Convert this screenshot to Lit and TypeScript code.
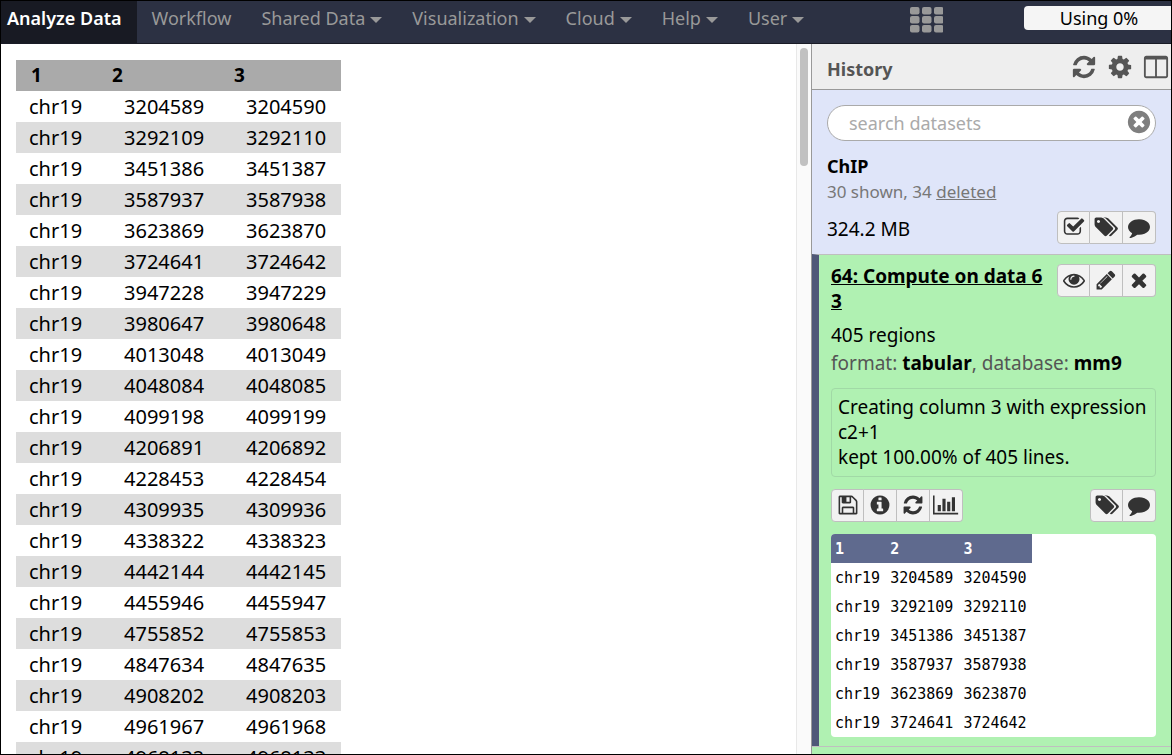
import { LitElement, html, css, svg } from "lit";
import { customElement, property } from "lit/decorators.js";

const CIRCLE = "m387-226q0 209-103 385.5t-279.5 279.5-385.5 103-385.5-103-279.5-279.5-103-385.5 103-385.5 279.5-279.5 385.5-103 385.5 103 279.5 279.5 103 385.5z";

const ICONS: Record<string, { w: number; d: string }> = {
  refresh: { w: 1792, d: "M1639 1056q0 5-1 7-64 268-268 434.5t-478 166.5q-146 0-282.5-55t-243.5-157l-129 129q-19 19-45 19t-45-19-19-45v-448q0-26 19-45t45-19h448q26 0 45 19t19 45-19 45l-137 137q71 66 161 102t187 36q134 0 250-65t186-179q11-17 53-117 8-23 30-23h192q13 0 22.5 9.5t9.5 22.5zm25-800v448q0 26-19 45t-45 19h-448q-26 0-45-19t-19-45 19-45l138-138q-148-137-349-137-134 0-250 65t-186 179q-11 17-53 117-8 23-30 23h-199q-13 0-22.5-9.5t-9.5-22.5v-7q65-268 270-434.5t480-166.5q146 0 284 55.5t245 156.5l130-129q19-19 45-19t45 19 19 45z" },
  cog: { w: 1792, d: "M1152 896q0-106-75-181t-181-75-181 75-75 181 75 181 181 75 181-75 75-181zm512-109v222q0 12-8 23t-20 13l-185 28q-19 54-39 91 35 50 107 138 10 12 10 25t-9 23q-27 37-99 108t-94 71q-12 0-26-9l-138-108q-44 23-91 38-16 136-29 186-7 28-36 28h-222q-14 0-24.5-8.5t-11.5-21.5l-28-184q-49-16-90-37l-141 107q-10 9-25 9-14 0-25-11-126-114-165-168-7-10-7-23 0-12 8-23 15-21 51-66.5t54-70.5q-27-50-41-99l-183-27q-13-2-21-12.5t-8-23.5v-222q0-12 8-23t19-13l186-28q14-46 39-92-40-57-107-138-10-12-10-24 0-10 9-23 26-36 98.5-107.5t94.5-71.5q13 0 26 10l138 107q44-23 91-38 16-136 29-186 7-28 36-28h222q14 0 24.5 8.5t11.5 21.5l28 184q49 16 90 37l142-107q9-9 24-9 13 0 25 10 129 119 165 170 7 8 7 22 0 12-8 23-15 21-51 66.5t-54 70.5q26 50 41 98l183 28q13 2 21 12.5t8 23.5z" },
  columns: { w: 1792, d: "M224 1536h608v-1152h-640v1120q0 13 9.5 22.5t22.5 9.5zm1376-32v-1120h-640v1152h608q13 0 22.5-9.5t9.5-22.5zm128-1216v1216q0 66-47 113t-113 47h-1344q-66 0-113-47t-47-113v-1216q0-66 47-113t113-47h1344q66 0 113 47t47 113z" },
  check: { w: 1792, d: "M1472 930v318q0 119-84.5 203.5t-203.5 84.5h-832q-119 0-203.5-84.5t-84.5-203.5v-832q0-119 84.5-203.5t203.5-84.5h832q63 0 117 25 15 7 18 23 3 17-9 29l-49 49q-10 10-23 10-3 0-9-2-23-6-45-6h-832q-66 0-113 47t-47 113v832q0 66 47 113t113 47h832q66 0 113-47t47-113v-254q0-13 9-22l64-64q10-10 23-10 6 0 12 3 20 8 20 29zm231-489l-814 814q-24 24-57 24t-57-24l-430-430q-24-24-24-57t24-57l110-110q24-24 57-24t57 24l263 263 647-647q24-24 57-24t57 24l110 110q24 24 24 57t-24 57z" },
  tags: { w: 2048, d: "M576 448q0-53-37.5-90.5t-90.5-37.5-90.5 37.5-37.5 90.5 37.5 90.5 90.5 37.5 90.5-37.5 37.5-90.5zm1067 576q0 53-37 90l-491 492q-39 37-91 37-53 0-90-37l-715-716q-38-37-64.5-101t-26.5-117v-416q0-52 38-90t90-38h416q53 0 117 26.5t102 64.5l715 714q37 39 37 91zm384 0q0 53-37 90l-491 492q-39 37-91 37-36 0-59-14t-53-45l470-470q37-37 37-90 0-52-37-91l-715-714q-38-38-102-64.5t-117-26.5h224q53 0 117 26.5t102 64.5l715 714q37 39 37 91z" },
  comment: { w: 1792, d: "M1792 896q0 174-120 321.5t-326 233-450 85.5q-70 0-145-8-198 175-460 242-49 14-114 22-17 2-30.5-9t-17.5-29v-1q-3-4-.5-12t2-10 4.5-9.5l6-9 7-8.5 8-9q7-8 31-34.5t34.5-38 31-39.5 32.5-51 27-59 26-76q-157-89-247.5-220t-90.5-281q0-130 71-248.5t191-204.5 286-136.5 348-50.5q244 0 450 85.5t326 233 120 321.5z" },
  eye: { w: 1792, d: "M1664 960q-152-236-381-353 61 104 61 225 0 185-131.5 316.5t-316.5 131.5-316.5-131.5-131.5-316.5q0-121 61-225-229 117-381 353 133 205 333.5 326.5t434.5 121.5 434.5-121.5 333.5-326.5zm-720-384q0-20-14-34t-34-14q-125 0-214.5 89.5t-89.5 214.5q0 20 14 34t34 14 34-14 14-34q0-86 61-147t147-61q20 0 34-14t14-34zm848 384q0 34-20 69-140 230-376.5 368.5t-499.5 138.5-499.5-139-376.5-368q-20-35-20-69t20-69q140-229 376.5-368t499.5-139 499.5 139 376.5 368q20 35 20 69z" },
  pencil: { w: 1792, d: "M491 1536l91-91-235-235-91 91v107h128v128h107zm523-928q0-22-22-22-10 0-17 7l-542 542q-7 7-7 17 0 22 22 22 10 0 17-7l542-542q7-7 7-17zm-54-192l416 416-832 832h-416v-416zm683 96q0 53-37 90l-166 166-416-416 166-165q36-38 90-38 53 0 91 38l235 234q37 39 37 91z" },
  times: { w: 1792, d: "M1490 1322q0 40-28 68l-136 136q-28 28-68 28t-68-28l-294-294-294 294q-28 28-68 28t-68-28l-136-136q-28-28-28-68t28-68l294-294-294-294q-28-28-28-68t28-68l136-136q28-28 68-28t68 28l294 294 294-294q28-28 68-28t68 28l136 136q28 28 28 68t-28 68l-294 294 294 294q28 28 28 68z" },
  save: { w: 1792, d: "M512 1536h768v-384h-768v384zm896 0h128v-896q0-14-10-38.5t-20-34.5l-281-281q-10-10-34-20t-39-10v416q0 40-28 68t-68 28h-576q-40 0-68-28t-28-68v-416h-128v1280h128v-416q0-40 28-68t68-28h832q40 0 68 28t28 68v416zm-384-928v-320q0-13-9.5-22.5t-22.5-9.5h-192q-13 0-22.5 9.5t-9.5 22.5v320q0 13 9.5 22.5t22.5 9.5h192q13 0 22.5-9.5t9.5-22.5zm640 32v928q0 40-28 68t-68 28h-1344q-40 0-68-28t-28-68v-1344q0-40 28-68t68-28h928q40 0 88 20t76 48l280 280q28 28 48 76t20 88z" },
  info: { w: 1792, d: "M1152 1376v-160q0-14-9-23t-23-9h-96v-512q0-14-9-23t-23-9h-320q-14 0-23 9t-9 23v160q0 14 9 23t23 9h96v320h-96q-14 0-23 9t-9 23v160q0 14 9 23t23 9h448q14 0 23-9t9-23zm-128-896v-160q0-14-9-23t-23-9h-192q-14 0-23 9t-9 23v160q0 14 9 23t23 9h192q14 0 23-9t9-23zm640 416q0 209-103 385.5t-279.5 279.5-385.5 103-385.5-103-279.5-279.5-103-385.5 103-385.5 279.5-279.5 385.5-103 385.5 103 279.5 279.5 103 385.5z" },
  chart: { w: 2048, d: "M640 896v512h-256v-512h256zm384-512v1024h-256v-1024h256zm1024 1152v128h-2048v-1536h128v1408h1920zm-640-896v768h-256v-768h256zm384-384v1152h-256v-1152h256z" },
  clear: { w: 1792, d: "M1277 1122q0-26-19-45l-181-181 181-181q19-19 19-45 0-27-19-46l-90-90q-19-19-46-19-26 0-45 19l-181 181-181-181q-19-19-45-19-27 0-46 19l-90 90q-19 19-19 46 0 26 19 45l181 181-181 181q-19 19-19 45 0 27 19 46l90 90q19 19 46 19 26 0 45-19l181-181 181 181q19 19 45 19 27 0 46-19l90-90q19-19 19-46z" + CIRCLE },
};

@customElement("fa-icon")
class FaIcon extends LitElement {
  static styles = css`
    :host { display: block; height: 22px; }
    svg { display: block; height: 100%; fill: currentColor; }
  `;
  @property() name = "";
  render() {
    const i = ICONS[this.name];
    return html`<svg viewBox="0 0 ${i.w} 1792" aria-hidden="true">${svg`<path d=${i.d}></path>`}</svg>`;
  }
}

const STARTS = [
  3204589, 3292109, 3451386, 3587937, 3623869, 3724641, 3947228, 3980647,
  4013048, 4048084, 4099198, 4206891, 4228453, 4309935, 4338322, 4442144,
  4455946, 4755852, 4847634, 4908202, 4961967, 4968132,
];

const MENU = ["Shared Data", "Visualization", "Cloud", "Help", "User"];

@customElement("app-root")
class AppRoot extends LitElement {
  static styles = css`
    :host {
      display: flex;
      flex-direction: column;
      height: 100vh;
      box-sizing: border-box;
      border: 1px solid #000;
      overflow: hidden;
      background: #fff;
      color: #000;
      font: 18px/25px "Noto Sans", "Open Sans", sans-serif;
    }
    * { box-sizing: border-box; }
    button { font: inherit; color: inherit; padding: 0; border: 0; background: none; cursor: pointer; }
    table { border-collapse: collapse; }

    .masthead {
      display: flex;
      flex: none;
      height: 43px;
      background: #2c3143;
      border-bottom: 1px solid #191b26;
      color: #999;
    }
    .nav { display: flex; flex: 1; }
    .nav a {
      display: flex;
      gap: 5px;
      padding: 5px 15px 0;
      color: inherit;
      text-decoration: none;
      white-space: nowrap;
    }
    .nav .current {
      padding-left: 6px;
      background: #181a23;
      color: #fff;
      font-weight: 600;
    }
    .caret {
      align-self: flex-start;
      margin-top: 11px;
      border: 6px solid transparent;
      border-top-color: currentColor;
      border-bottom: 0;
    }
    .apps { margin: 6px 81px 0 0; align-self: flex-start; }
    .apps svg { display: block; fill: #999; }
    .quota {
      flex: none;
      width: 147px;
      height: 24px;
      margin-top: 5px;
      padding-left: 3px;
      border-radius: 4px 0 0 4px;
      background: #f5f5f5;
      color: #000;
      line-height: 25px;
      text-align: center;
    }

    .body { display: flex; flex: 1; min-height: 0; }
    .center { flex: 1; min-width: 0; padding: 16px 15px 0; overflow: hidden; }
    .data { font-size: 20px; }
    .data th, .data td { height: 31px; padding: 0 15px; }
    .data th { background: #aaa; font-size: 19px; text-align: left; }
    .data td { min-width: 81px; text-align: right; }
    .data td:first-child { padding-left: 13px; }
    .data td + td { min-width: 122px; }
    .data tbody tr:nth-child(even) { background: #ddd; }

    .scroll {
      flex: none;
      width: 15px;
      padding: 4px 3px;
      border-left: 1px solid #e8e8e8;
      background: #fafafa;
    }
    .thumb { width: 8px; height: 118px; border-radius: 4px; background: #c1c1c1; }

    .panel {
      display: flex;
      flex-direction: column;
      flex: none;
      width: 360px;
      border-left: 1px solid #999;
      overflow: hidden;
      background: #dfe5f9;
      font-size: 19px;
    }
    .panel-head {
      display: flex;
      align-items: center;
      flex: none;
      height: 46px;
      padding: 0 2px 0 15px;
      border-bottom: 1px solid #999;
      background: #eee;
      color: #555;
    }
    .panel-head h2 { flex: 1; margin: 5px 0 0; font-size: 18px; }
    .tools { display: flex; gap: 10px; }
    .tools fa-icon { height: 26px; }

    .summary { padding: 15px 15px 10px; }
    .search { position: relative; }
    .search input {
      display: block;
      width: 100%;
      height: 36px;
      padding: 0 40px 0 21px;
      border: 1px solid #aaa;
      border-radius: 18px;
      background: #fff;
      font: inherit;
      font-size: 18px;
    }
    .search input::placeholder { color: #aaa; opacity: 1; }
    .search button { position: absolute; top: 4px; right: 4px; color: #7f7f7f; }
    .search fa-icon { height: 26px; }
    .name { margin: 13px 0 0; font-size: 18px; line-height: 25px; }
    .counts { color: #777; font-size: 17px; }
    .counts a { color: inherit; }
    .size { display: flex; justify-content: space-between; align-items: center; margin-top: 7px; }
    .size span { padding-top: 3px; }

    .group { display: flex; flex: none; }
    .group button {
      display: flex;
      justify-content: center;
      width: 33px;
      height: 33px;
      padding-top: 4px;
      border: 1px solid #bfbfbf;
      background: #f2f2f2;
      color: #333;
    }
    .group button + button { border-left: 0; }
    .group button:first-child { border-radius: 4px 0 0 4px; }
    .group button:last-child { border-radius: 0 4px 4px 0; }

    .dataset {
      flex: none;
      padding: 9px 15px 9px 12px;
      border-top: 1px solid #bfbfbf;
      border-left: 7px solid #4f5878;
      background: #b0f1b2;
    }
    .next { flex: 1; border-top: 1px solid #bfbfbf; background: #b0f1b2; }
    .title-row { display: flex; justify-content: space-between; gap: 12px; }
    .title { color: #000; font-weight: 700; word-break: break-all; }
    .blurb { margin: 9px 0 0; }
    .meta { margin: 3px 0 0; color: #555; }
    .meta b { color: #000; }
    .info {
      margin: 12px 0;
      padding: 6px;
      border: 1px solid #a1d9a6;
      border-radius: 4px;
    }
    .actions { display: flex; justify-content: space-between; }
    .peek {
      margin-top: 12px;
      border-radius: 4px;
      overflow: hidden;
      background: #fff;
      font: 15px/20px "DejaVu Sans Mono", "Liberation Mono", monospace;
    }
    .peek th, .peek td { height: 29px; padding: 0 5px; text-align: left; }
    .peek th:first-child, .peek td:first-child { padding-left: 4px; }
    .peek th { background: #5f6a8e; color: #fff; }
  `;

  private group(items: [string, string][]) {
    return html`<div class="group">
      ${items.map(([icon, label]) => html`<button aria-label=${label}><fa-icon name=${icon}></fa-icon></button>`)}
    </div>`;
  }

  private table(cls: string, starts: number[]) {
    return html`<table class=${cls}>
      <thead><tr><th>1</th><th>2</th><th>3</th></tr></thead>
      <tbody>
        ${starts.map((n) => html`<tr><td>chr19</td><td>${n}</td><td>${n + 1}</td></tr>`)}
      </tbody>
    </table>`;
  }

  render() {
    return html`
      <header class="masthead">
        <nav class="nav">
          <a class="current" href="#">Analyze Data</a>
          <a href="#">Workflow</a>
          ${MENU.map((m) => html`<a href="#">${m}<span class="caret"></span></a>`)}
        </nav>
        <button class="apps" aria-label="Applications">
          <svg width="33" height="27" viewBox="0 0 33 27">
            ${[0, 9, 18].map((y) => [0, 12, 24].map((x) => svg`<rect x=${x} y=${y} width="9.5" height="7.5" rx="2"></rect>`))}
          </svg>
        </button>
        <div class="quota">Using 0%</div>
      </header>
      <div class="body">
        <main class="center">${this.table("data", STARTS)}</main>
        <div class="scroll"><div class="thumb"></div></div>
        <aside class="panel">
          <div class="panel-head">
            <h2>History</h2>
            <div class="tools">
              <button aria-label="Refresh history"><fa-icon name="refresh"></fa-icon></button>
              <button aria-label="History options"><fa-icon name="cog"></fa-icon></button>
              <button aria-label="View all histories"><fa-icon name="columns"></fa-icon></button>
            </div>
          </div>
          <section class="summary">
            <div class="search">
              <input type="text" placeholder="search datasets" aria-label="search datasets">
              <button aria-label="Clear search"><fa-icon name="clear"></fa-icon></button>
            </div>
            <h3 class="name">ChIP</h3>
            <div class="counts">30 shown, 34 <a href="#">deleted</a></div>
            <div class="size">
              <span>324.2 MB</span>
              ${this.group([["check", "Select datasets"], ["tags", "Edit history tags"], ["comment", "Edit history annotation"]])}
            </div>
          </section>
          <section class="dataset">
            <div class="title-row">
              <a class="title" href="#">64: Compute on data 63</a>
              ${this.group([["eye", "View data"], ["pencil", "Edit attributes"], ["times", "Delete"]])}
            </div>
            <p class="blurb">405 regions</p>
            <p class="meta">format: <b>tabular</b>, database: <b>mm9</b></p>
            <div class="info">Creating column 3 with expression c2+1<br>kept 100.00% of 405 lines.</div>
            <div class="actions">
              ${this.group([["save", "Download"], ["info", "View details"], ["refresh", "Run this job again"], ["chart", "Visualize"]])}
              ${this.group([["tags", "Edit dataset tags"], ["comment", "Edit dataset annotation"]])}
            </div>
            <div class="peek">${this.table("", STARTS.slice(0, 6))}</div>
          </section>
          <div class="next"></div>
        </aside>
      </div>
    `;
  }
}
